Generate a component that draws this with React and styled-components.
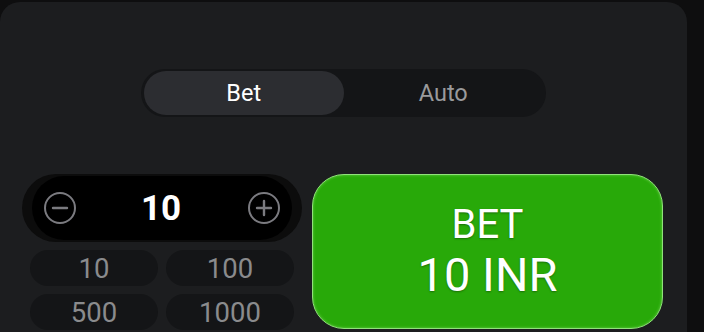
import React, { useState } from "react";
import styled, { createGlobalStyle } from "styled-components";

const Global = createGlobalStyle`
  html, body { margin: 0; padding: 0; background: #0e0e0f; }
  body { font-family: Roboto, "Liberation Sans", sans-serif; }
`;

const Page = styled.div`
  width: 704px;
  height: 332px;
  overflow: hidden;
  padding-top: 2px;
  box-sizing: border-box;
`;

const Panel = styled.div`
  width: 687px;
  height: 340px;
  background: #1c1d1f;
  border-radius: 20px 20px 0 0;
  padding-top: 67px;
  box-sizing: border-box;
  display: flex;
  flex-direction: column;
  align-items: center;
`;

const Tabs = styled.div`
  width: 405px;
  height: 48px;
  box-sizing: border-box;
  padding: 2px 3px;
  border-radius: 24px;
  background: #141517;
  display: flex;
`;

const Tab = styled.button`
  flex: 1;
  border: none;
  border-radius: 22px;
  background: ${(p) => (p.$active ? "#2c2d31" : "transparent")};
  color: ${(p) => (p.$active ? "#ffffff" : "#9a9a9c")};
  font-family: Roboto, "Liberation Sans", sans-serif;
  font-size: 23.5px;
  cursor: pointer;
  padding: 0;
`;

const Controls = styled.div`
  align-self: stretch;
  margin-top: 57px;
  padding: 0 24px 0 22px;
  display: flex;
  gap: 10px;
  align-items: flex-start;
`;

const LeftCol = styled.div`
  width: 280px;
  display: flex;
  flex-direction: column;
  align-items: center;
  gap: 8px;
`;

const Stepper = styled.div`
  width: 280px;
  height: 68px;
  border-radius: 34px;
  background: #0c0c0c;
  padding: 2px 10px;
  box-sizing: border-box;
`;

const StepperInner = styled.div`
  height: 100%;
  border-radius: 32px;
  background: #000;
  display: flex;
  align-items: center;
  justify-content: space-between;
  padding: 0 12px 0 12px;
`;

const Value = styled.div`
  color: #fff;
  font-weight: 700;
  font-size: 35px;
  line-height: 1;
  padding-right: 2px;
`;

const IconBtn = styled.button`
  width: 32px;
  height: 32px;
  padding: 0;
  border: none;
  background: none;
  display: flex;
  cursor: pointer;
`;

const QuickGrid = styled.div`
  width: 264px;
  display: grid;
  grid-template-columns: 128px 128px;
  gap: 8px;
`;

const Quick = styled.button`
  height: 36px;
  border: none;
  border-radius: 18px;
  background: #141517;
  color: #8a8b8d;
  font-family: Roboto, "Liberation Sans", sans-serif;
  font-size: 27.5px;
  padding: 0;
  cursor: pointer;
`;

const BetButton = styled.button`
  flex: 1;
  height: 155px;
  border-radius: 32px;
  border: 1.5px solid #90e27a;
  background: #28a909;
  box-shadow: inset 0 0 3px rgba(180, 255, 150, 0.45);
  color: #fff;
  font-family: Roboto, "Liberation Sans", sans-serif;
  display: flex;
  flex-direction: column;
  align-items: center;
  justify-content: center;
  text-shadow: 0 1px 2px rgba(0, 0, 0, 0.35);
  cursor: pointer;
  padding: 0;
`;

const BetLabel = styled.span`
  font-size: 40px;
  line-height: 46px;
`;

const BetAmount = styled.span`
  font-size: 47px;
  line-height: 54px;
`;

const Circle = ({ plus }) => (
  <svg width="32" height="32" viewBox="0 0 32 32">
    <circle cx="16" cy="16" r="15" fill="none" stroke="#7b7b80" strokeWidth="2" />
    <line x1="9" y1="16" x2="23" y2="16" stroke="#7b7b80" strokeWidth="2.4" strokeLinecap="round" />
    {plus && <line x1="16" y1="9" x2="16" y2="23" stroke="#7b7b80" strokeWidth="2.4" strokeLinecap="round" />}
  </svg>
);

export default function App() {
  const [tab, setTab] = useState("bet");
  const [amount, setAmount] = useState(10);
  return (
    <Page>
      <Global />
      <Panel>
        <Tabs>
          <Tab $active={tab === "bet"} onClick={() => setTab("bet")}>Bet</Tab>
          <Tab $active={tab === "auto"} onClick={() => setTab("auto")}>Auto</Tab>
        </Tabs>
        <Controls>
          <LeftCol>
            <Stepper>
              <StepperInner>
                <IconBtn onClick={() => setAmount((a) => Math.max(1, a - 1))}>
                  <Circle />
                </IconBtn>
                <Value>{amount}</Value>
                <IconBtn onClick={() => setAmount((a) => a + 1)}>
                  <Circle plus />
                </IconBtn>
              </StepperInner>
            </Stepper>
            <QuickGrid>
              {[10, 100, 500, 1000].map((v) => (
                <Quick key={v} onClick={() => setAmount(v)}>{v}</Quick>
              ))}
            </QuickGrid>
          </LeftCol>
          <BetButton>
            <BetLabel>BET</BetLabel>
            <BetAmount>{amount} INR</BetAmount>
          </BetButton>
        </Controls>
      </Panel>
    </Page>
  );
}
